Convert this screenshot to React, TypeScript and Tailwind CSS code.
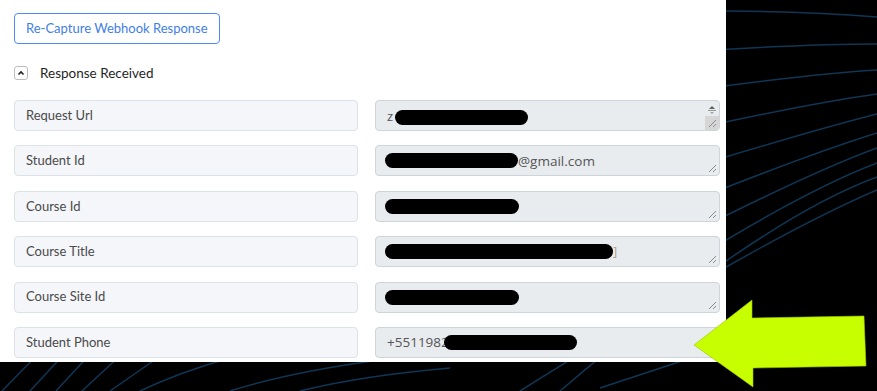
import React from "react";

type Row = {
  label: string;
  content: React.ReactNode;
  scroll?: boolean;
};

function Blot({ w, className = "" }: { w: string; className?: string }) {
  return <span className={`inline-block h-[15px] rounded-full bg-black ${w} ${className}`} />;
}

const rows: Row[] = [
  {
    label: "Request Url",
    scroll: true,
    content: (
      <>
        <span className="mt-[3px]">z</span>
        <Blot w="w-[133px]" className="ml-[2px] mt-[3px]" />
      </>
    ),
  },
  {
    label: "Student Id",
    content: (
      <>
        <Blot w="w-[133px]" className="-ml-[2px]" />
        <span className="text-[13.5px]">@gmail.com</span>
      </>
    ),
  },
  { label: "Course Id", content: <Blot w="w-[134px]" className="-ml-[2px]" /> },
  {
    label: "Course Title",
    content: (
      <>
        <Blot w="w-[228px]" className="-ml-[2px]" />
        <span className="text-[#b0a28a]">]</span>
      </>
    ),
  },
  { label: "Course Site Id", content: <Blot w="w-[134px]" className="-ml-[2px]" /> },
  {
    label: "Student Phone",
    content: (
      <>
        <span className="text-[13.5px]">+5511982</span>
        <Blot w="w-[133px]" className="-ml-[5px]" />
      </>
    ),
  },
];

function Grip() {
  return (
    <svg className="absolute bottom-[2px] right-[2px]" width="9" height="9" viewBox="0 0 9 9">
      <path d="M1 8 L8 1 M5 8 L8 5" stroke="#8a8a8a" strokeWidth="1" />
    </svg>
  );
}

function ScrollBar() {
  return (
    <div className="absolute bottom-0 right-0 top-0 flex w-[14px] flex-col">
      <div className="flex flex-1 justify-center pt-[3px]">
        <svg width="10" height="11" viewBox="0 0 10 11">
          <path d="M2 5 L5 2 L8 5 Z" fill="#606060" />
          <path d="M1 6.5 H9" stroke="#9a9a9a" strokeWidth="1" />
          <path d="M3 8 L5 10 L7 8 Z" fill="#a0a0a0" />
        </svg>
      </div>
      <div className="relative h-[14px] rounded-br-[4px] bg-[#d6d6d6]">
        <Grip />
      </div>
    </div>
  );
}

function Background() {
  const right = [
    "M600 12 Q760 8 877 17",
    "M600 58 Q780 44 877 44",
    "M600 104 Q780 76 877 70",
    "M600 150 Q790 106 877 94",
    "M600 196 Q790 136 877 114",
    "M600 238 Q790 160 877 133",
    "M600 280 Q790 180 877 148",
    "M600 320 Q780 200 877 163",
    "M560 391 Q760 220 877 177",
    "M520 391 Q760 240 877 190",
    "M600 388 Q660 368 700 355",
  ];
  const bottom = [
    "M40 352 L2 391",
    "M66 352 L30 391",
    "M92 352 L56 391",
    "M124 352 L82 391",
    "M166 352 L110 391",
    "M230 358 Q180 372 140 391",
    "M380 360 Q290 372 230 391",
    "M450 368 Q360 376 300 391",
  ];
  return (
    <svg className="absolute inset-0" width="877" height="391" viewBox="0 0 877 391">
      {[...right, ...bottom].map((d, i) => (
        <path key={i} d={d} fill="none" stroke="#0f3655" strokeWidth="1.5" />
      ))}
    </svg>
  );
}

function Arrow() {
  return (
    <svg className="absolute inset-0" width="877" height="391" viewBox="0 0 877 391">
      <polygon
        points="694,345 752,300 752,318 864,316 866,366 753,368 753,387"
        fill="#c8ff00"
        stroke="#9ec400"
        strokeWidth="0.6"
      />
    </svg>
  );
}

export default function App() {
  return (
    <div className="relative h-[391px] w-[877px] overflow-hidden bg-black">
      <Background />
      <div className="relative h-[362px] w-[726px] bg-white pl-[14px] pr-[6px] pt-[13px] font-['Lato',sans-serif]">
        <button className="h-[31px] rounded-[4px] border border-[#4b8df0] px-[11px] text-[13px] text-[#3f80e6]">
          Re-Capture Webhook Response
        </button>
        <div className="mt-[22px] flex h-[14px] items-center">
          <span className="flex h-[14px] w-[14px] items-center justify-center rounded-[3px] border border-[#b9bdc2]">
            <svg width="8" height="6" viewBox="0 0 8 6">
              <path d="M1.5 4.5 L4 2 L6.5 4.5" fill="none" stroke="#222" strokeWidth="1.6" />
            </svg>
          </span>
          <span className="ml-[12px] text-[13.5px] text-[#1f1f1f]">Response Received</span>
        </div>
        <div className="mt-[20px] flex flex-col gap-[14.4px]">
          {rows.map((row) => (
            <div key={row.label} className="flex h-[31px] gap-[17px]">
              <div className="flex w-[344px] shrink-0 items-center rounded-[4px] border border-[#dde2e8] bg-[#f4f6f9] px-[11px] text-[13px] text-[#4a4a4a]">
                {row.label}
              </div>
              <div className="relative flex w-[345px] shrink-0 items-center overflow-hidden rounded-[4px] border border-[#cfd4da] bg-[#e9ecef] pl-[11px] font-['Open_Sans',sans-serif] text-[13px] text-[#555]">
                {row.content}
                {row.scroll ? <ScrollBar /> : <Grip />}
              </div>
            </div>
          ))}
        </div>
      </div>
      <Arrow />
    </div>
  );
}
